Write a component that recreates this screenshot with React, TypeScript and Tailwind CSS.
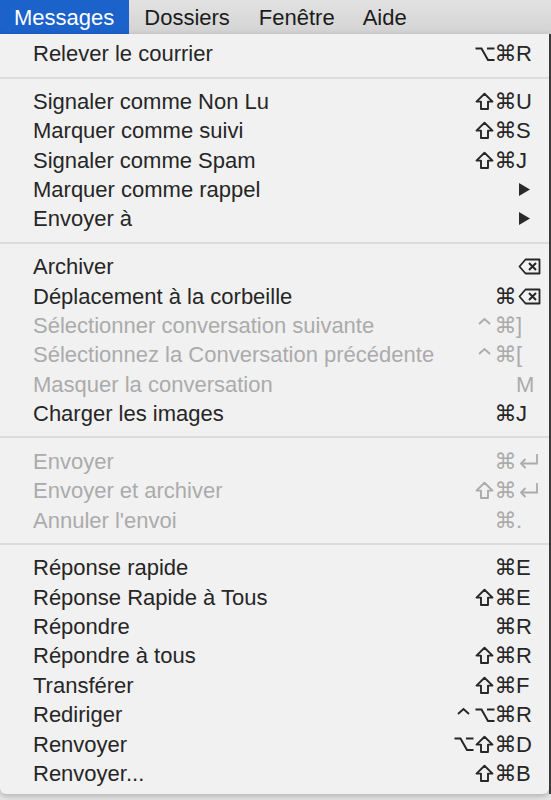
import * as React from "react"

type Item = {
    label: string
    mods?: string[]
    keyChar?: string
    submenu?: boolean
    disabled?: boolean
}

const groups: Item[][] = [
    [{ label: "Relever le courrier", mods: ["⌥", "⌘"], keyChar: "R" }],
    [
        { label: "Signaler comme Non Lu", mods: ["⇧", "⌘"], keyChar: "U" },
        { label: "Marquer comme suivi", mods: ["⇧", "⌘"], keyChar: "S" },
        { label: "Signaler comme Spam", mods: ["⇧", "⌘"], keyChar: "J" },
        { label: "Marquer comme rappel", submenu: true },
        { label: "Envoyer à", submenu: true },
    ],
    [
        { label: "Archiver", keyChar: "⌫" },
        { label: "Déplacement à la corbeille", mods: ["⌘"], keyChar: "⌫" },
        { label: "Sélectionner conversation suivante", mods: ["⌃", "⌘"], keyChar: "]", disabled: true },
        { label: "Sélectionnez la Conversation précédente", mods: ["⌃", "⌘"], keyChar: "[", disabled: true },
        { label: "Masquer la conversation", keyChar: "M", disabled: true },
        { label: "Charger les images", mods: ["⌘"], keyChar: "J" },
    ],
    [
        { label: "Envoyer", mods: ["⌘"], keyChar: "↵", disabled: true },
        { label: "Envoyer et archiver", mods: ["⇧", "⌘"], keyChar: "↵", disabled: true },
        { label: "Annuler l'envoi", mods: ["⌘"], keyChar: ".", disabled: true },
    ],
    [
        { label: "Réponse rapide", mods: ["⌘"], keyChar: "E" },
        { label: "Réponse Rapide à Tous", mods: ["⇧", "⌘"], keyChar: "E" },
        { label: "Répondre", mods: ["⌘"], keyChar: "R" },
        { label: "Répondre à tous", mods: ["⇧", "⌘"], keyChar: "R" },
        { label: "Transférer", mods: ["⇧", "⌘"], keyChar: "F" },
        { label: "Rediriger", mods: ["⌃", "⌥", "⌘"], keyChar: "R" },
        { label: "Renvoyer", mods: ["⌥", "⇧", "⌘"], keyChar: "D" },
        { label: "Renvoyer...", mods: ["⇧", "⌘"], keyChar: "B" },
    ],
]

// Key symbols drawn as small icons so they match the mac glyphs
function KeyGlyph({ k }: { k: string }) {
    if (k === "⇧")
        return (
            <svg width="19" height="19" viewBox="0 0 19 19" fill="none" stroke="currentColor" strokeWidth="1.9" strokeLinejoin="round">
                <path d="M9.5 1.8 L17.5 9.6 H13 V17 H6 V9.6 H1.5 Z" />
            </svg>
        )
    if (k === "⌥")
        return (
            <svg width="20" height="16" viewBox="0 0 20 16" fill="none" stroke="currentColor" strokeWidth="2">
                <path d="M0.5 2.5 H6.5 L13 14 H19.5" />
                <path d="M12 2.5 H19.5" />
            </svg>
        )
    if (k === "⌃")
        return (
            <svg width="13" height="16" viewBox="0 0 13 16" fill="none" stroke="currentColor" strokeWidth="1.9">
                <path d="M1 7 L6.5 2 L12 7" />
            </svg>
        )
    if (k === "⌫")
        return (
            <svg width="23" height="17" viewBox="0 0 23 17" fill="none" stroke="currentColor" strokeWidth="1.8" strokeLinejoin="round">
                <path d="M7.5 1.5 H21.5 V15.5 H7.5 L1.5 8.5 Z" />
                <path d="M11 5 L18 12 M18 5 L11 12" strokeWidth="2" />
            </svg>
        )
    if (k === "↵")
        return (
            <svg width="21" height="17" viewBox="0 0 21 17" fill="none" stroke="currentColor" strokeWidth="1.8">
                <path d="M19 1 V10.5 H3" />
                <path d="M7.5 6 L3 10.5 L7.5 15" strokeLinejoin="round" />
            </svg>
        )
    return <span>{k}</span>
}

function MenuRow({ item }: { item: Item }) {
    const color = item.disabled ? "text-[#ababab]" : "text-[#262626]"
    return (
        <div className={`flex items-center h-[29.4px] pl-[33px] ${color}`}>
            <span className="flex-1 whitespace-nowrap">{item.label}</span>
            <div className="flex justify-end items-center">
                {(item.mods ?? []).map((m, i) => (
                    <span key={i} className="w-[21px] flex justify-center items-center">
                        <KeyGlyph k={m} />
                    </span>
                ))}
            </div>
            <div className="w-[33px] flex items-center">
                {item.submenu ? (
                    <svg width="11" height="13" viewBox="0 0 11 13" className="ml-[3px]">
                        <path d="M0 0 L11 6.5 L0 13 Z" fill="#2a2a2a" />
                    </svg>
                ) : (
                    <span className={item.keyChar === "⌫" || item.keyChar === "↵" ? "ml-[2px] flex" : "flex"}>
                        <KeyGlyph k={item.keyChar ?? ""} />
                    </span>
                )}
            </div>
        </div>
    )
}

export default function App() {
    return (
        <div className="w-[551px] h-[800px] overflow-hidden bg-[#e6e6e6] text-[22px] font-['Liberation_Sans','DejaVu_Sans',sans-serif]">
            {/* Menu bar */}
            <div className="flex h-[34px] bg-gradient-to-b from-[#e2e2e2] to-[#d3d3d3] text-[#1c1c1c]">
                <div className="flex items-center pl-[14px] pr-[15px] bg-[#1c62cb] text-white">Messages</div>
                <div className="flex items-center px-[15px]">Dossiers</div>
                <div className="flex items-center px-[14px]">Fenêtre</div>
                <div className="flex items-center px-[14px]">Aide</div>
            </div>

            <div className="flex">
                {/* Menu panel */}
                <div className="w-[549px] bg-[#f1f1f1] pt-[5px] pb-[5px] rounded-b-[6px] shadow-[0_2px_6px_rgba(0,0,0,0.25)]">
                    {groups.map((g, gi) => (
                        <React.Fragment key={gi}>
                            {gi > 0 && (
                                <div className="h-[18.3px] flex items-center">
                                    <div className="h-[2px] w-full bg-[#dcdcdc]" />
                                </div>
                            )}
                            {g.map((item, i) => (
                                <MenuRow key={i} item={item} />
                            ))}
                        </React.Fragment>
                    ))}
                </div>
                {/* window behind */}
                <div className="w-[2px] h-[760px] bg-[#3a3a3a]" />
            </div>
        </div>
    )
}
